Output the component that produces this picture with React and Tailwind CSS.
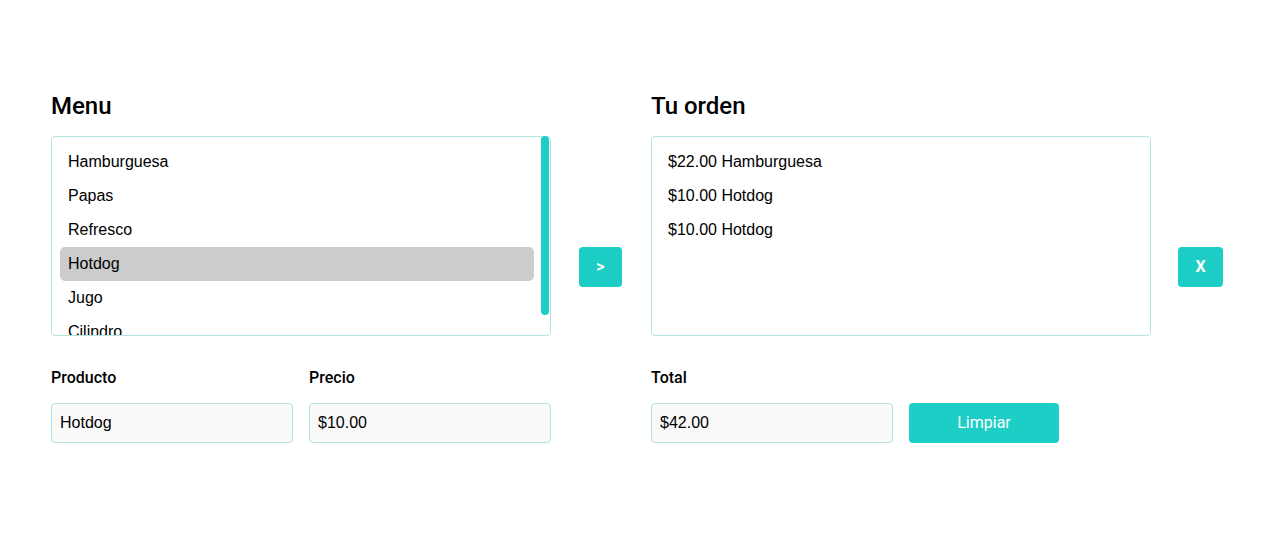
import React from 'react';

const menu = ['Hamburguesa', 'Papas', 'Refresco', 'Hotdog', 'Jugo', 'Cilindro'];
const orden = ['$22.00 Hamburguesa', '$10.00 Hotdog', '$10.00 Hotdog'];

const heading = "font-['Roboto',sans-serif] text-2xl font-medium text-black leading-[32px]";
const label = "font-['Roboto',sans-serif] text-base font-medium text-black leading-5";
const input =
  "h-10 w-[242px] rounded border border-[#b3e2e1] bg-[#f9f9f9] px-2 flex items-center text-base text-black";
const btn =
  "h-10 rounded bg-[#1ccec6] text-white flex items-center justify-center font-['Roboto',sans-serif]";

export default function App() {
  return (
    <div className="min-h-[550px] bg-white font-['Liberation_Sans',Arial,sans-serif] pl-[51px] pt-[90px]">
      <div className="flex">
        <div className="w-[500px]">
          <h2 className={heading}>Menu</h2>
          <div className="relative mt-[14px] h-[200px] w-[500px] rounded border border-[#b3e2e1]">
            <div className="h-full overflow-hidden pl-2 pr-4 py-2">
              {menu.map((m) => (
                <div
                  key={m}
                  className={`h-[34px] flex items-center px-2 rounded-[5px] text-base text-black ${
                    m === 'Hotdog' ? 'bg-[#cccccc]' : ''
                  }`}
                >
                  {m}
                </div>
              ))}
            </div>
            {/* scrollbar thumb */}
            <div className="absolute right-px -top-px h-[179px] w-2 rounded-full bg-[#1ccec6]" />
          </div>
        </div>

        <div className="ml-[28px] mt-[157px]">
          <button className={`${btn} w-[43px] text-base font-bold`}>&gt;</button>
        </div>

        <div className="ml-[29px] w-[500px]">
          <h2 className={heading}>Tu orden</h2>
          <div className="mt-[14px] h-[200px] w-[500px] rounded border border-[#b3e2e1] px-2 py-2">
            {orden.map((o, i) => (
              <div key={i} className="h-[34px] flex items-center px-2 text-base text-black">
                {o}
              </div>
            ))}
          </div>
        </div>

        <div className="ml-[27px] mt-[157px]">
          <button className={`${btn} w-[45px] text-base font-bold`}>X</button>
        </div>
      </div>

      <div className="flex mt-[32px]">
        <div className="flex gap-4 w-[500px]">
          <div>
            <div className={label}>Producto</div>
            <div className={`${input} mt-[15px]`}>Hotdog</div>
          </div>
          <div>
            <div className={label}>Precio</div>
            <div className={`${input} mt-[15px]`}>$10.00</div>
          </div>
        </div>
        <div className="ml-[100px] flex gap-4 items-end">
          <div>
            <div className={label}>Total</div>
            <div className={`${input} mt-[15px]`}>$42.00</div>
          </div>
          <button className={`${btn} w-[150px] text-base`}>Limpiar</button>
        </div>
      </div>
    </div>
  );
}
